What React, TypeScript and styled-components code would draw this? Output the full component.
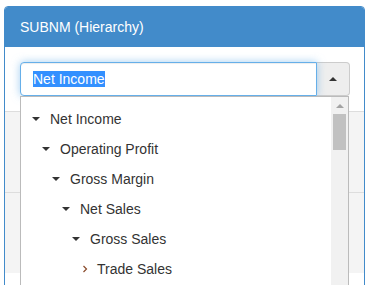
import React from "react";
import styled, { createGlobalStyle } from "styled-components";

const GlobalStyle = createGlobalStyle`
  html, body {
    margin: 0;
    padding: 0;
    background: #fff;
    overflow: hidden;
  }
  body {
    font-family: "Liberation Sans", Arial, sans-serif;
    font-size: 14px;
    color: #333;
  }
`;

const Page = styled.div`
  padding: 6px 5px 0 4px;
  height: 285px;
  box-sizing: border-box;
  overflow: hidden;
`;

const Panel = styled.div`
  border: 1px solid #428bca;
  border-radius: 4px 4px 0 0;
  background: #fff;
  height: 320px;
`;

const PanelHeading = styled.div`
  background: #428bca;
  color: #fff;
  padding: 10px 15px;
  line-height: 20px;
  font-size: 14px;
  border-radius: 3px 3px 0 0;
`;

const PanelBody = styled.div`
  padding: 15px 14px 15px 15px;
`;

const InputGroup = styled.div`
  position: relative;
  display: flex;
  height: 34px;
`;

const FakeInput = styled.div`
  flex: 1;
  box-sizing: border-box;
  height: 34px;
  padding: 6px 12px;
  line-height: 20px;
  border: 1px solid #66afe9;
  border-radius: 4px 0 0 4px;
  box-shadow: inset 0 1px 1px rgba(0, 0, 0, 0.075),
    0 0 8px rgba(102, 175, 233, 0.6);
  position: relative;
  z-index: 2;
  background: #fff;
`;

const Selected = styled.span`
  background: #3390ff;
  color: #fff;
  line-height: 16px;
  display: inline-block;
`;

const AddonButton = styled.div`
  width: 33px;
  height: 34px;
  box-sizing: border-box;
  background: #eee;
  border: 1px solid #ccc;
  border-left: none;
  border-radius: 0 4px 4px 0;
  display: flex;
  align-items: center;
  justify-content: center;
`;

const Caret = styled.span<{ $dir: "up" | "down"; $color?: string }>`
  display: inline-block;
  width: 0;
  height: 0;
  border-left: 4px solid transparent;
  border-right: 4px solid transparent;
  ${(p) =>
    p.$dir === "up"
      ? `border-bottom: 4px solid ${p.$color || "#333"};`
      : `border-top: 4px solid ${p.$color || "#333"};`}
`;

const Dropdown = styled.div`
  position: absolute;
  top: 34px;
  left: 0;
  width: 329px;
  height: 200px;
  box-sizing: border-box;
  border: 1px solid #bbb;
  background: #fff;
  display: flex;
  z-index: 5;
`;

const TreeList = styled.ul`
  list-style: none;
  margin: 0;
  padding: 7px 0 0 0;
  flex: 1;
  overflow: hidden;
`;

const TreeItem = styled.li<{ $level: number }>`
  display: flex;
  align-items: center;
  height: 30px;
  line-height: 30px;
  padding-left: ${(p) => 11 + p.$level * 10}px;
  white-space: nowrap;
`;

const Toggle = styled.span<{ $leaf?: boolean }>`
  width: ${(p) => (p.$leaf ? 15 : 18)}px;
  display: flex;
  align-items: center;
`;

const Chevron = styled.svg`
  display: block;
`;

const ScrollTrack = styled.div`
  width: 17px;
  background: #f1f1f1;
  display: flex;
  flex-direction: column;
  align-items: center;
`;

const ScrollArrow = styled.div`
  height: 17px;
  display: flex;
  align-items: center;
  justify-content: center;
  width: 100%;
`;

const ScrollThumb = styled.div`
  width: 13px;
  height: 36px;
  background: #c1c1c1;
`;

const Table = styled.div`
  display: flex;
  flex-direction: column;
`;

const TableRow = styled.div`
  height: 80px;
  border-top: 1px solid #ddd;
  background: #f4f4f4;
`;

const items = [
  { label: "Net Income", level: 0, open: true },
  { label: "Operating Profit", level: 1, open: true },
  { label: "Gross Margin", level: 2, open: true },
  { label: "Net Sales", level: 3, open: true },
  { label: "Gross Sales", level: 4, open: true },
  { label: "Trade Sales", level: 5, open: false },
];

export default function App() {
  return (
    <>
      <GlobalStyle />
      <Page>
        <Panel>
          <PanelHeading>SUBNM (Hierarchy)</PanelHeading>
          <PanelBody>
            <InputGroup>
              <FakeInput>
                <Selected>Net Income</Selected>
              </FakeInput>
              <AddonButton>
                <Caret $dir="up" />
              </AddonButton>
              <Dropdown>
                <TreeList>
                  {items.map((it) => (
                    <TreeItem key={it.label} $level={it.level}>
                      <Toggle $leaf={!it.open}>
                        {it.open ? (
                          <Caret $dir="down" />
                        ) : (
                          <Chevron width="6" height="8" viewBox="0 0 6 8">
                            <polyline
                              points="1.5,1 4.5,4 1.5,7"
                              fill="none"
                              stroke="#8a4a2a"
                              strokeWidth="1.2"
                            />
                          </Chevron>
                        )}
                      </Toggle>
                      {it.label}
                    </TreeItem>
                  ))}
                </TreeList>
                <ScrollTrack>
                  <ScrollArrow>
                    <Caret $dir="up" $color="#a3a3a3" />
                  </ScrollArrow>
                  <ScrollThumb />
                </ScrollTrack>
              </Dropdown>
            </InputGroup>
          </PanelBody>
          <Table>
            <TableRow />
            <TableRow />
          </Table>
        </Panel>
      </Page>
    </>
  );
}
